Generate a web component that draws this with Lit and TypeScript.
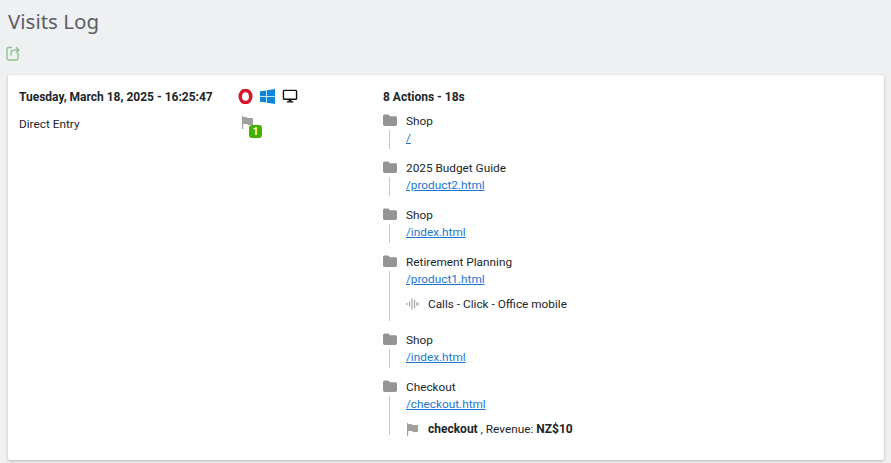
import { LitElement, html, css, svg } from "lit";
import { customElement } from "lit/decorators.js";

const folder = svg`<path d="M0 2.200C0 1.200.8.5 1.700.5h3.600l1.700 1.700h5.300c1 0 1.700.7 1.700 1.700v6.400c0 1-.7 1.700-1.700 1.700H1.700C.8 12 0 11.300 0 10.300z" fill="#949494"/>`;
const flag = svg`<path d="M1 0h1.200v13H1z M2.200 1h3.200l1 1h5.600v7H7l-1-1H2.200z" fill="#a0a0a0"/>`;

interface Action { title: string; href: string; sub?: unknown; cls?: string }

const actions: Action[] = [
  { title: "Shop", href: "/" },
  { title: "2025 Budget Guide", href: "/product2.html" },
  { title: "Shop", href: "/index.html" },
  {
    title: "Retirement Planning",
    href: "/product1.html",
    cls: "tall",
    sub: html`<svg class="sub-ic" viewBox="0 0 14 14" width="14" height="14"><path d="M1 6v2M3.500 4.500v5M6 1.500v11M8.500 3v8M11 5v4M13 6.200v1.600" stroke="#9a9a9a" stroke-width="1.100" fill="none"/></svg><span>Calls - Click - Office mobile</span>`,
  },
  { title: "Shop", href: "/index.html" },
  {
    title: "Checkout",
    href: "/checkout.html",
    sub: html`<svg class="sub-ic" viewBox="0 0 14 13" width="14" height="13">${flag}</svg><span><b>checkout</b> , Revenue: <b>NZ$10</b></span>`,
  },
];

@customElement("app-root")
export class AppRoot extends LitElement {
  static styles = css`
    :host {
      display: block;
      width: 891px;
      height: 463px;
      overflow: hidden;
      background: #eef0f2;
      font-family: Roboto, "Noto Sans", sans-serif;
      font-size: 11.800px;
      color: #212529;
    }
    b { font-size: 12px; }
    h1 {
      margin: 0;
      padding: 6px 0 0 8px;
      height: 39px;
      box-sizing: content-box;
      font-family: "Noto Sans", sans-serif;
      font-size: 20.500px;
      line-height: 30px;
      font-weight: 400;
      color: #5c5f66;
    }
    .export {
      display: block;
      margin: 0 0 14px 6px;
      height: 16px;
    }
    .card {
      margin: 0 7px 0 8px;
      height: 385px;
      box-sizing: border-box;
      background: #fff;
      border-radius: 2px;
      box-shadow: 0 1px 3px rgba(0, 0, 0, 0.25);
      padding: 13px 11px;
      display: grid;
      grid-template-columns: 219px 145px 1fr;
    }
    .date, .count {
      font-size: 12px;
      font-weight: 700;
      line-height: 18px;
      color: #212529;
    }
    .entry { margin-top: 9px; line-height: 18px; }
    .icons { display: flex; align-items: center; gap: 7px; height: 16px; }
    .ref { position: relative; width: 24px; height: 22px; margin: 12px 0 0 3px; }
    .badge {
      position: absolute;
      left: 8px;
      top: 9px;
      width: 13px;
      height: 13px;
      border-radius: 3px;
      background: #44b000;
      color: #fff;
      font-size: 10px;
      font-weight: 700;
      line-height: 13px;
      text-align: center;
    }
    .list { margin-top: 7px; }
    .item { margin-bottom: 11px; }
    .head { display: flex; align-items: center; gap: 9px; height: 17px; line-height: 17px; }
    .head svg { flex: none; margin-top: -3px; }
    .body {
      margin-left: 6px;
      border-left: 1px solid #c8c8c8;
      padding-left: 16px;
      height: 19px;
      line-height: 17px;
    }
    .has-sub .body { height: auto; }
    .tall .body { padding-bottom: 11px; }
    a { color: #1b76d2; text-decoration: underline; display: block; }
    .sub { display: flex; align-items: center; height: 12px; margin-top: 10px; gap: 8px; }
    .sub-ic { flex: none; }
  `;

  render() {
    return html`
      <h1>Visits Log</h1>
      <svg class="export" viewBox="0 0 14 16" width="14" height="16" fill="none" stroke="#86c08f" stroke-width="1.300">
        <path d="M6 2.500H2.500C1.500 2.500 1 3.100 1 4v9.500c0 1 .5 1.500 1.500 1.500h8c1 0 1.500-.5 1.500-1.500V8"/>
        <path d="M5 10.500V8c0-1.800 1-2.800 2.800-2.800H12.500M10 2.300l2.900 2.900L10 8.100"/>
      </svg>
      <div class="card">
        <div>
          <div class="date">Tuesday, March 18, 2025 - 16:25:47</div>
          <div class="entry">Direct Entry</div>
        </div>
        <div>
          <div class="icons">
            <svg viewBox="0 0 16 16" width="15" height="15"><ellipse cx="8" cy="8" rx="5.600" ry="6.500" fill="none" stroke="#d8152f" stroke-width="3.800"/></svg>
            <svg viewBox="0 0 16 16" width="15" height="15"><path d="M0 2.400 6.500 1.500V7.500H0zM7.300 1.400 16 0V7.500H7.300zM0 8.300H6.500V14.500L0 13.600zM7.300 8.300H16V16L7.300 14.600z" fill="#0f86d8"/></svg>
            <svg viewBox="0 0 16 16" width="16" height="15"><rect x="1" y="1.500" width="14" height="9.500" rx="1" fill="none" stroke="#111" stroke-width="1.500"/><path d="M6.500 11h3v2h2v1.500h-7V13h2z" fill="#111"/></svg>
          </div>
          <div class="ref">
            <svg viewBox="0 0 13 13" width="13" height="13">${flag}</svg>
            <span class="badge">1</span>
          </div>
        </div>
        <div>
          <div class="count">8 Actions - 18s</div>
          <div class="list">
            ${actions.map(
              (a) => html`<div class="item ${a.cls ?? ""} ${a.sub ? "has-sub" : ""}">
                <div class="head">
                  <svg viewBox="0 0 14 13" width="14" height="13">${folder}</svg>
                  <span>${a.title}</span>
                </div>
                <div class="body">
                  <a href="#">${a.href}</a>
                  ${a.sub ? html`<div class="sub">${a.sub}</div>` : ""}
                </div>
              </div>`
            )}
          </div>
        </div>
      </div>
    `;
  }
}
